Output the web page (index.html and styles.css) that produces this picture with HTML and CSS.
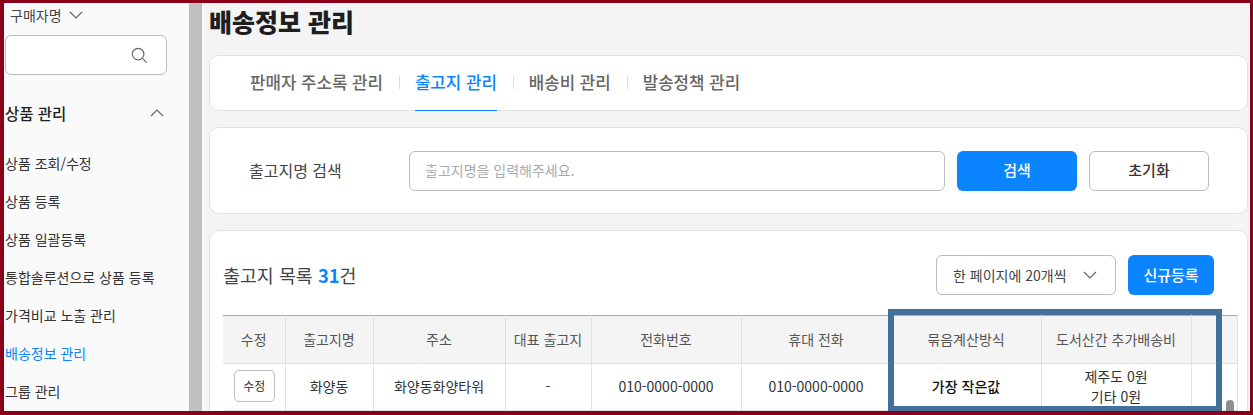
FILE: index.html
```html
<!DOCTYPE html>
<html lang="ko">
<head>
  <meta charset="UTF-8">
  <title>배송정보 관리</title>
  <link rel="stylesheet" href="styles.css">
</head>
<body>
  <div class="frame">
    <aside class="sidebar">
      <div class="buyer-select">
        <span>구매자명</span>
        <svg class="chev" viewBox="0 0 14 8" width="14" height="8"><path d="M1 1l6 6 6-6"/></svg>
      </div>
      <div class="side-search">
        <svg viewBox="0 0 18 18" width="16" height="16"><circle cx="8" cy="8" r="6.5"/><path d="M12.6 12.6L17.5 17.5"/></svg>
      </div>
      <div class="side-head">
        <span>상품 관리</span>
        <svg class="chev" viewBox="0 0 14 8" width="14" height="8"><path d="M1 7l6-6 6 6"/></svg>
      </div>
      <ul class="side-menu">
        <li>상품 조회/수정</li>
        <li>상품 등록</li>
        <li>상품 일괄등록</li>
        <li>통합솔루션으로 상품 등록</li>
        <li>가격비교 노출 관리</li>
        <li class="active">배송정보 관리</li>
        <li>그룹 관리</li>
      </ul>
    </aside>
    <div class="side-scroll"></div>

    <main class="content">
      <h1>배송정보 관리</h1>

      <nav class="card tabs">
        <a>판매자 주소록 관리</a>
        <a class="active">출고지 관리</a>
        <a>배송비 관리</a>
        <a>발송정책 관리</a>
      </nav>

      <section class="card search-card">
        <label>출고지명 검색</label>
        <div class="search-input">출고지명을 입력해주세요.</div>
        <button class="btn btn-blue btn-search">검색</button>
        <button class="btn btn-white">초기화</button>
      </section>

      <section class="card list-card">
        <div class="list-head">
          <h2>출고지 목록 <b>31</b>건</h2>
          <div class="page-size">
            <span>한 페이지에 20개씩</span>
            <svg class="chev" viewBox="0 0 14 8" width="14" height="8"><path d="M1 1l6 6 6-6"/></svg>
          </div>
          <button class="btn btn-blue btn-new">신규등록</button>
        </div>
        <table>
          <colgroup>
            <col class="c1"><col class="c2"><col class="c3"><col class="c4"><col class="c5"><col class="c6"><col class="c7"><col class="c8"><col>
          </colgroup>
          <thead>
            <tr>
              <th>수정</th><th>출고지명</th><th>주소</th><th>대표 출고지</th><th>전화번호</th><th>휴대 전화</th><th>묶음계산방식</th><th>도서산간 추가배송비</th><th></th>
            </tr>
          </thead>
          <tbody>
            <tr>
              <td><span class="edit-btn">수정</span></td>
              <td>화양동</td>
              <td>화양동화양타워</td>
              <td>-</td>
              <td>010-0000-0000</td>
              <td>010-0000-0000</td>
              <td class="strong">가장 작은값</td>
              <td>제주도 0원<br>기타 0원</td>
              <td></td>
            </tr>
          </tbody>
        </table>
      </section>
      <div class="table-thumb"></div>
      <div class="highlight"></div>
    </main>
  </div>
</body>
</html>
```

FILE: styles.css
```css
* {
  margin: 0;
  padding: 0;
  box-sizing: border-box;
}

html, body {
  width: 1253px;
  height: 415px;
  overflow: hidden;
  font-family: "Noto Sans CJK KR", "Noto Sans", sans-serif;
  color: #333;
}

.frame {
  display: flex;
  width: 1253px;
  height: 415px;
  overflow: hidden;
  border-style: solid;
  border-color: #8a0018;
  border-width: 3px 3px 4px 4px;
  background-color: #f4f4f4;
}

.chev {
  fill: none;
  stroke: #666;
  stroke-width: 1.2;
}

/* sidebar */
.sidebar {
  width: 185px;
  flex: none;
  background-color: #fafafa;
  overflow: hidden;
}

.buyer-select {
  display: flex;
  align-items: center;
  gap: 7px;
  height: 24px;
  padding-left: 6px;
  font-size: 14px;
  color: #444;
}

.side-search {
  display: flex;
  justify-content: flex-end;
  align-items: center;
  width: 162px;
  height: 40px;
  margin: 8px 0 0 1px;
  padding-right: 19px;
  background-color: #fff;
  border: 1px solid #bbb;
  border-radius: 6px;
}

.side-search svg {
  fill: none;
  stroke: #666;
  stroke-width: 1.3;
}

.side-head {
  display: flex;
  justify-content: space-between;
  align-items: center;
  height: 24px;
  margin-top: 26px;
  padding: 0 25px 0 1px;
  font-size: 15.5px;
  font-weight: 500;
  color: #222;
}

.side-menu {
  list-style: none;
  margin-top: 19px;
}

.side-menu li {
  height: 38px;
  line-height: 38px;
  padding-left: 1px;
  font-size: 14px;
  color: #333;
  white-space: nowrap;
}

.side-menu li.active {
  color: #0a84ff;
}

.side-scroll {
  width: 13px;
  flex: none;
  background-color: #c0c0c0;
}

/* main */
.content {
  position: relative;
  flex: 1;
  padding: 0 2px 0 5px;
  border-left: 2px solid #f9f9f9;
}

h1 {
  height: 52px;
  font-size: 25px;
  line-height: 36px;
  font-weight: 900;
  color: #1e1e1e;
}

.card {
  background-color: #fff;
  border: 1px solid #e2e2e2;
  border-radius: 10px;
}

.tabs {
  display: flex;
  height: 56px;
  padding-left: 40px;
  font-size: 16.8px;
  font-weight: 500;
  color: #666;
}

.tabs a {
  position: relative;
  display: flex;
  align-items: center;
  height: 55px;
  padding-bottom: 3px;
  margin-right: 32px;
}

.tabs a + a::before {
  content: "";
  position: absolute;
  left: -16px;
  top: 20px;
  width: 1px;
  height: 13px;
  background-color: #ddd;
}

.tabs a.active {
  color: #0a84ff;
  border-bottom: 1px solid #0a84ff;
}

.search-card {
  display: flex;
  align-items: center;
  height: 87px;
  margin-top: 16px;
  padding-left: 39px;
}

.search-card label {
  width: 160px;
  padding-bottom: 2px;
  font-size: 16px;
  color: #444;
}

.search-input {
  width: 536px;
  height: 40px;
  line-height: 36px;
  padding-left: 15px;
  font-size: 14px;
  color: #aaa;
  border: 1px solid #bbb;
  border-radius: 6px;
}

.btn {
  font-family: inherit;
  font-size: 15px;
  font-weight: 500;
  padding-bottom: 2px;
  border-radius: 6px;
}

.btn-blue {
  color: #fff;
  background-color: #0a84ff;
  border: none;
}

.btn-white {
  width: 120px;
  height: 40px;
  margin-left: 12px;
  color: #333;
  background-color: #fff;
  border: 1px solid #bbb;
}

.btn-search {
  width: 120px;
  height: 40px;
  margin-left: 12px;
}

.list-card {
  height: 200px;
  margin-top: 16px;
  padding: 0 9px 0 13px;
}

.list-head {
  display: flex;
  align-items: center;
  height: 84px;
  padding-top: 4px;
}

.list-head h2 {
  flex: 1;
  font-size: 18.4px;
  font-weight: 400;
  color: #444;
}

.list-head h2 b {
  color: #0a84ff;
  font-weight: 700;
}

.page-size {
  display: flex;
  justify-content: space-between;
  align-items: center;
  width: 180px;
  height: 40px;
  padding: 0 18px 0 16px;
  font-size: 14px;
  color: #444;
  background-color: #fff;
  border: 1px solid #bbb;
  border-radius: 6px;
}

.btn-new {
  width: 86px;
  height: 40px;
  margin: 0 24px 0 12px;
}

table {
  width: 1015px;
  table-layout: fixed;
  border-collapse: collapse;
  border-top: 1px solid #aaa;
  font-size: 14px;
  text-align: center;
}

.c1 { width: 62px; }
.c2 { width: 88px; }
.c3 { width: 132px; }
.c4 { width: 86px; }
.c5 { width: 150px; }
.c6 { width: 150px; }
.c7 { width: 150px; }
.c8 { width: 150px; }

th {
  height: 48px;
  padding-bottom: 2px;
  font-weight: 400;
  color: #555;
  background-color: #f4f4f4;
  border: 1px solid #e0e0e0;
  border-top: 0;
}

td {
  height: 47px;
  padding-bottom: 2px;
  line-height: 20px;
  color: #333;
  border: 1px solid #e0e0e0;
}

th:first-child, td:first-child {
  border-left: 0;
}

.strong {
  font-weight: 500;
  color: #111;
}

.edit-btn {
  display: inline-block;
  width: 41px;
  height: 32px;
  margin: 0 0 1px 1px;
  line-height: 29px;
  font-size: 12px;
  vertical-align: middle;
  background-color: #fff;
  border: 1px solid #bbb;
  border-radius: 5px;
}

/* overlays */
.table-thumb {
  position: absolute;
  left: 1022px;
  top: 397px;
  width: 8px;
  height: 20px;
  background-color: #8f8f8f;
  border-radius: 4px;
}

.highlight {
  position: absolute;
  left: 684px;
  top: 306px;
  width: 334px;
  height: 103px;
  border: 6px solid #43709b;
}
```
